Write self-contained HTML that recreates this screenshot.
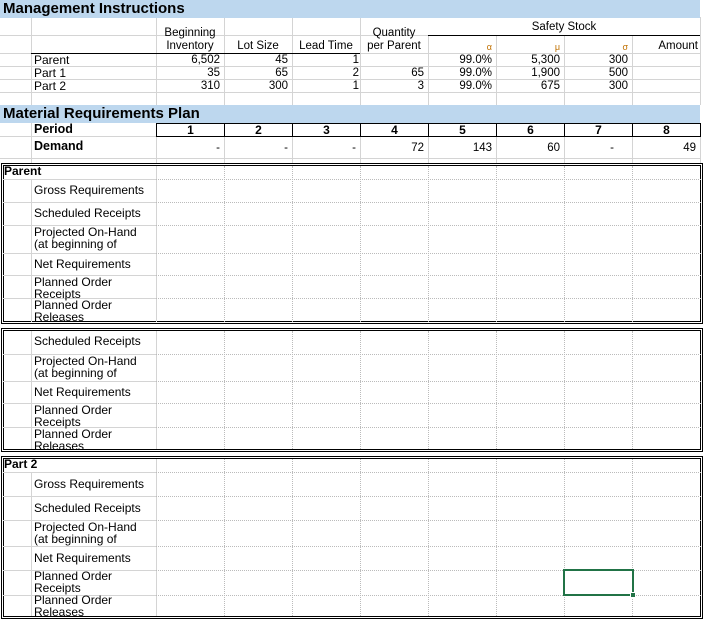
<!DOCTYPE html>
<html><head><meta charset="utf-8"><style>
*{margin:0;padding:0;box-sizing:border-box}
body{width:707px;height:620px;position:relative;background:#fff;font-family:"Liberation Sans",sans-serif;font-size:11.5px;color:#000;overflow:hidden}
div{position:absolute}
.vl{width:1px;background:#d4d4d4}
.hl{height:1px;background:#d4d4d4}
.band{background:#bdd7ee;left:0;width:700px;height:18px}
.ttl{font-weight:bold;font-size:15px;line-height:18px;left:3px}
.r{text-align:right;width:64px;line-height:13px}
.c{text-align:center;width:68px;line-height:13px}
.lbl{left:34px;line-height:12px;white-space:nowrap;font-size:12px}
.blk{left:1px;width:702px;border:3px double #000}
.dv{width:0;border-left:1px dotted #bbb}
.dh{height:0;left:156px;width:545px;border-top:1px dotted #bbb}
.sh{height:1px;left:3px;width:153px;background:#d4d4d4}
.pb{top:123px;height:14px;width:69px;border:1px solid #000;font-weight:bold;text-align:center;line-height:12px;font-size:12px}
</style></head><body>
<div class="vl" style="left:31px;top:17px;height:88px"></div>
<div class="vl" style="left:156px;top:17px;height:88px"></div>
<div class="vl" style="left:224px;top:17px;height:88px"></div>
<div class="vl" style="left:292px;top:17px;height:88px"></div>
<div class="vl" style="left:360px;top:17px;height:88px"></div>
<div class="vl" style="left:428px;top:35px;height:70px"></div>
<div class="vl" style="left:496px;top:35px;height:70px"></div>
<div class="vl" style="left:564px;top:35px;height:70px"></div>
<div class="vl" style="left:632px;top:35px;height:70px"></div>
<div class="vl" style="left:700px;top:17px;height:88px"></div>
<div class="vl" style="left:31px;top:123px;height:40px"></div>
<div class="vl" style="left:156px;top:136px;height:27px"></div>
<div class="vl" style="left:224px;top:136px;height:27px"></div>
<div class="vl" style="left:292px;top:136px;height:27px"></div>
<div class="vl" style="left:360px;top:136px;height:27px"></div>
<div class="vl" style="left:428px;top:136px;height:27px"></div>
<div class="vl" style="left:496px;top:136px;height:27px"></div>
<div class="vl" style="left:564px;top:136px;height:27px"></div>
<div class="vl" style="left:632px;top:136px;height:27px"></div>
<div class="vl" style="left:700px;top:136px;height:27px"></div>
<div class="hl" style="left:0;top:35px;width:428px"></div>
<div style="left:428px;top:35px;width:272px;height:1px;background:#000"></div>
<div style="left:31px;top:53px;width:329px;height:1px;background:#000"></div>
<div class="hl" style="left:0;top:53px;width:31px"></div>
<div class="hl" style="left:360px;top:53px;width:340px"></div>
<div class="hl" style="left:0;top:66px;width:700px"></div>
<div class="hl" style="left:0;top:79px;width:700px"></div>
<div class="hl" style="left:0;top:92px;width:700px"></div>
<div class="hl" style="left:0;top:136px;width:156px"></div>
<div class="hl" style="left:0;top:158px;width:700px"></div>

<div class="band" style="top:0"></div>
<div class="ttl" style="top:0">Management Instructions</div>
<div class="c" style="left:156px;top:27px">Beginning</div>
<div class="c" style="left:156px;top:40px">Inventory</div>
<div class="c" style="left:224px;top:40px">Lot Size</div>
<div class="c" style="left:292px;top:40px">Lead Time</div>
<div class="c" style="left:360px;top:27px">Quantity</div>
<div class="c" style="left:360px;top:40px">per Parent</div>
<div style="left:428px;top:21px;width:272px;text-align:center;line-height:13px">Safety Stock</div>
<div class="r" style="left:428px;top:41px;color:#c07000;font-size:9px">α</div>
<div class="r" style="left:496px;top:41px;color:#c07000;font-size:9px">μ</div>
<div class="r" style="left:564px;top:41px;color:#c07000;font-size:9px">σ</div>
<div class="r" style="left:632px;top:40px;width:66px">Amount</div>
<div class="lbl" style="top:54px">Parent</div>
<div class="lbl" style="top:67px">Part 1</div>
<div class="lbl" style="top:80px">Part 2</div>
<div class="r" style="left:156px;top:54px">6,502</div>
<div class="r" style="left:156px;top:67px">35</div>
<div class="r" style="left:156px;top:80px">310</div>
<div class="r" style="left:224px;top:54px">45</div>
<div class="r" style="left:224px;top:67px">65</div>
<div class="r" style="left:224px;top:80px">300</div>
<div class="r" style="left:292px;top:54px;width:67px">1</div>
<div class="r" style="left:292px;top:67px;width:67px">2</div>
<div class="r" style="left:292px;top:80px;width:67px">1</div>
<div class="r" style="left:360px;top:67px">65</div>
<div class="r" style="left:360px;top:80px">3</div>
<div class="r" style="left:428px;top:54px">99.0%</div>
<div class="r" style="left:428px;top:67px">99.0%</div>
<div class="r" style="left:428px;top:80px">99.0%</div>
<div class="r" style="left:496px;top:54px">5,300</div>
<div class="r" style="left:496px;top:67px">1,900</div>
<div class="r" style="left:496px;top:80px">675</div>
<div class="r" style="left:564px;top:54px">300</div>
<div class="r" style="left:564px;top:67px">500</div>
<div class="r" style="left:564px;top:80px">300</div>

<div class="band" style="top:105px"></div>
<div class="ttl" style="top:105px">Material Requirements Plan</div>
<div class="lbl" style="top:123px;font-weight:bold;font-size:12.5px;line-height:13px">Period</div>
<div class="pb" style="left:156px">1</div>
<div class="pb" style="left:224px">2</div>
<div class="pb" style="left:292px">3</div>
<div class="pb" style="left:360px">4</div>
<div class="pb" style="left:428px">5</div>
<div class="pb" style="left:496px">6</div>
<div class="pb" style="left:564px">7</div>
<div class="pb" style="left:632px">8</div>
<div class="lbl" style="top:140px;font-weight:bold;font-size:12.5px;line-height:13px">Demand</div>
<div class="r" style="left:156px;top:142px">-</div>
<div class="r" style="left:224px;top:142px">-</div>
<div class="r" style="left:292px;top:142px">-</div>
<div class="r" style="left:360px;top:142px">72</div>
<div class="r" style="left:428px;top:142px">143</div>
<div class="r" style="left:496px;top:142px">60</div>
<div class="r" style="left:564px;top:142px;width:50px">-</div>
<div class="r" style="left:632px;top:142px">49</div>

<div class="blk" style="top:163px;height:161px"></div>
<div class="vl" style="left:31px;top:179px;height:143px"></div>
<div class="vl" style="left:156px;top:166px;height:156px"></div>
<div class="dv" style="left:224px;top:166px;height:156px"></div>
<div class="dv" style="left:292px;top:166px;height:156px"></div>
<div class="dv" style="left:360px;top:166px;height:156px"></div>
<div class="dv" style="left:428px;top:166px;height:156px"></div>
<div class="dv" style="left:496px;top:166px;height:156px"></div>
<div class="dv" style="left:564px;top:166px;height:156px"></div>
<div class="dv" style="left:632px;top:166px;height:156px"></div>
<div class="sh" style="top:179px"></div><div class="dh" style="top:179px"></div>
<div class="sh" style="top:202px"></div><div class="dh" style="top:202px"></div>
<div class="sh" style="top:225px"></div><div class="dh" style="top:225px"></div>
<div class="sh" style="top:253px"></div><div class="dh" style="top:253px"></div>
<div class="sh" style="top:275px"></div><div class="dh" style="top:275px"></div>
<div class="sh" style="top:298px"></div><div class="dh" style="top:298px"></div>
<div style="left:4px;top:165px;font-weight:bold;line-height:13px;font-size:12px">Parent</div>
<div class="lbl" style="top:184px">Gross Requirements</div>
<div class="lbl" style="top:207px">Scheduled Receipts</div>
<div class="lbl" style="top:226px">Projected On-Hand<br>(at beginning of</div>
<div class="lbl" style="top:258px">Net Requirements</div>
<div class="lbl" style="top:276px">Planned Order<br>Receipts</div>
<div class="lbl" style="top:299px">Planned Order<br>Releases</div>

<div class="blk" style="top:328px;height:124px"></div>
<div class="vl" style="left:31px;top:331px;height:118px"></div>
<div class="vl" style="left:156px;top:331px;height:118px"></div>
<div class="dv" style="left:224px;top:331px;height:118px"></div>
<div class="dv" style="left:292px;top:331px;height:118px"></div>
<div class="dv" style="left:360px;top:331px;height:118px"></div>
<div class="dv" style="left:428px;top:331px;height:118px"></div>
<div class="dv" style="left:496px;top:331px;height:118px"></div>
<div class="dv" style="left:564px;top:331px;height:118px"></div>
<div class="dv" style="left:632px;top:331px;height:118px"></div>
<div class="sh" style="top:354px"></div><div class="dh" style="top:354px"></div>
<div class="sh" style="top:381px"></div><div class="dh" style="top:381px"></div>
<div class="sh" style="top:403px"></div><div class="dh" style="top:403px"></div>
<div class="sh" style="top:427px"></div><div class="dh" style="top:427px"></div>
<div class="lbl" style="top:335px">Scheduled Receipts</div>
<div class="lbl" style="top:355px">Projected On-Hand<br>(at beginning of</div>
<div class="lbl" style="top:386px">Net Requirements</div>
<div class="lbl" style="top:404px">Planned Order<br>Receipts</div>
<div class="lbl" style="top:428px">Planned Order<br>Releases</div>

<div class="blk" style="top:456px;height:163px"></div>
<div class="vl" style="left:31px;top:472px;height:144px"></div>
<div class="vl" style="left:156px;top:459px;height:157px"></div>
<div class="dv" style="left:224px;top:459px;height:157px"></div>
<div class="dv" style="left:292px;top:459px;height:157px"></div>
<div class="dv" style="left:360px;top:459px;height:157px"></div>
<div class="dv" style="left:428px;top:459px;height:157px"></div>
<div class="dv" style="left:496px;top:459px;height:157px"></div>
<div class="dv" style="left:564px;top:459px;height:157px"></div>
<div class="dv" style="left:632px;top:459px;height:157px"></div>
<div class="sh" style="top:472px"></div><div class="dh" style="top:472px"></div>
<div class="sh" style="top:496px"></div><div class="dh" style="top:496px"></div>
<div class="sh" style="top:520px"></div><div class="dh" style="top:520px"></div>
<div class="sh" style="top:546px"></div><div class="dh" style="top:546px"></div>
<div class="sh" style="top:570px"></div><div class="dh" style="top:570px"></div>
<div class="sh" style="top:595px"></div><div class="dh" style="top:595px"></div>
<div style="left:4px;top:458px;font-weight:bold;line-height:13px;font-size:12px">Part 2</div>
<div class="lbl" style="top:478px">Gross Requirements</div>
<div class="lbl" style="top:502px">Scheduled Receipts</div>
<div class="lbl" style="top:521px">Projected On-Hand<br>(at beginning of</div>
<div class="lbl" style="top:552px">Net Requirements</div>
<div class="lbl" style="top:570px">Planned Order<br>Receipts</div>
<div class="lbl" style="top:594px">Planned Order<br>Releases</div>

<div style="left:563px;top:569px;width:71px;height:27px;border:2px solid #217346"></div>
<div style="left:630px;top:592px;width:6px;height:6px;background:#217346;border:1px solid #fff"></div>
</body></html>
